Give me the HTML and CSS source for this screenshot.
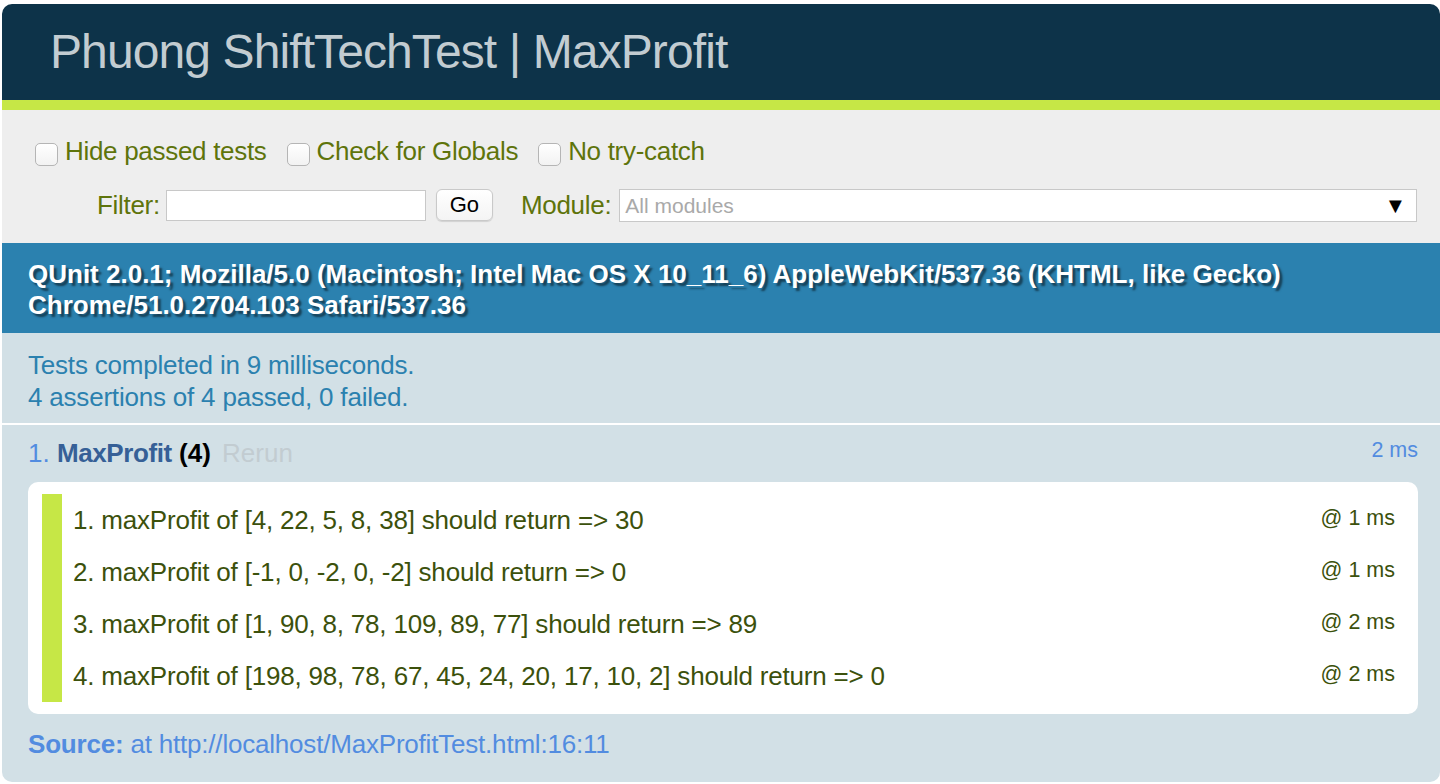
FILE: index.html
```html
<!DOCTYPE html>
<html lang="en">
<head>
<meta charset="utf-8">
<title>Phuong ShiftTechTest | MaxProfit</title>
<link rel="stylesheet" href="styles.css">
</head>
<body>
<div class="qunit">
  <h1 class="header"><a href="#">Phuong ShiftTechTest | MaxProfit</a></h1>
  <div class="banner"></div>
  <div class="toolbar">
    <div class="config-row">
      <label class="cfg"><input type="checkbox" class="cb"><span>Hide passed tests</span></label>
      <label class="cfg"><input type="checkbox" class="cb"><span>Check for Globals</span></label>
      <label class="cfg"><input type="checkbox" class="cb"><span>No try-catch</span></label>
    </div>
    <div class="filter-row">
      <label class="lbl">Filter:</label>
      <input type="text" class="filter-input">
      <button class="go-btn">Go</button>
      <label class="lbl module-lbl">Module:</label>
      <div class="select-wrap">
        <div class="select">All modules</div>
        <span class="arrow">▼</span>
      </div>
    </div>
  </div>
  <h2 class="user-agent">QUnit 2.0.1; Mozilla/5.0 (Macintosh; Intel Mac OS X 10_11_6) AppleWebKit/537.36 (KHTML, like Gecko) Chrome/51.0.2704.103 Safari/537.36</h2>
  <p class="testresult">Tests completed in 9 milliseconds.<br>4 assertions of 4 passed, 0 failed.</p>
  <ol class="tests">
    <li class="test pass">
      <div class="test-head">
        <div><span class="num">1. </span><strong><span class="test-name">MaxProfit</span> <b class="counts">(4)</b></strong> <a class="rerun" href="#">Rerun</a></div>
        <span class="runtime">2 ms</span>
      </div>
      <ol class="assert-list">
        <li class="assert"><span class="msg">1. maxProfit of [4, 22, 5, 8, 38] should return =&gt; 30</span><span class="a-runtime">@ 1 ms</span></li>
        <li class="assert"><span class="msg">2. maxProfit of [-1, 0, -2, 0, -2] should return =&gt; 0</span><span class="a-runtime">@ 1 ms</span></li>
        <li class="assert"><span class="msg">3. maxProfit of [1, 90, 8, 78, 109, 89, 77] should return =&gt; 89</span><span class="a-runtime">@ 2 ms</span></li>
        <li class="assert"><span class="msg">4. maxProfit of [198, 98, 78, 67, 45, 24, 20, 17, 10, 2] should return =&gt; 0</span><span class="a-runtime">@ 2 ms</span></li>
      </ol>
      <p class="source"><strong>Source:</strong> at http://localhost/MaxProfitTest.html:16:11</p>
    </li>
  </ol>
</div>
</body>
</html>
```

FILE: styles.css
```css
* { box-sizing: border-box; }
html, body { height: 100%; }
body {
  margin: 4px 0 0 2px;
  font-family: "Liberation Sans", Arial, sans-serif;
  background: #fff;
  overflow: hidden;
}
.qunit { width: 1438px; }

.header {
  margin: 0;
  padding: 24px 0 24px 48px;
  background: #0D3349;
  border-radius: 10px 10px 0 0;
  font-size: 48px;
  line-height: 48px;
  font-weight: 400;
  letter-spacing: -0.9px;
}
.header a { color: #C2CCD1; text-decoration: none; }

.banner { height: 10px; background: #C6E746; }

.toolbar {
  background: #EEE;
  color: #5E740B;
  font-size: 26px;
  height: 133px;
  padding: 0 0 0 33px;
}
.config-row {
  display: flex;
  align-items: center;
  gap: 20px;
  padding-top: 26px;
  height: 56px;
}
.cfg { display: flex; align-items: center; gap: 7px; letter-spacing: -0.3px; }
.cb {
  appearance: none;
  -webkit-appearance: none;
  margin: 6px 0 0 0;
  width: 23px;
  height: 23px;
  border: 1px solid #b5b5b5;
  border-radius: 5px;
  background: linear-gradient(#fff, #f2f2f2);
}
.filter-row {
  display: flex;
  align-items: center;
  height: 36px;
  margin-top: 21px;
  padding-left: 62px;
}
.lbl { letter-spacing: -0.3px; }
.filter-input {
  margin-left: 6px;
  width: 260px;
  height: 31px;
  border: 1px solid #c8c8c8;
  background: #fff;
}
.go-btn {
  margin-left: 10px;
  width: 57px;
  height: 32px;
  border: 1px solid #c9c9c9;
  border-radius: 6px;
  background: linear-gradient(#fff, #f4f4f4);
  box-shadow: 0 1px 1px rgba(0,0,0,0.12);
  font-family: "Liberation Sans", Arial, sans-serif;
  font-size: 22px;
  color: #000;
  padding: 0;
}
.module-lbl { margin-left: 28px; }
.select-wrap { position: relative; margin-left: 8px; }
.select {
  width: 798px;
  height: 33px;
  border: 1px solid #c8c8c8;
  background: #fff;
  color: #a9a9a9;
  font-size: 21px;
  line-height: 31px;
  padding-left: 5px;
}
.arrow {
  position: absolute;
  right: 11px;
  top: 2px;
  font-size: 22px;
  line-height: 29px;
  color: #000;
}

.user-agent {
  margin: 0;
  padding: 16px 26px 12px;
  background: #2B81AF;
  color: #fff;
  font-size: 26px;
  line-height: 31px;
  font-weight: 700;
  text-shadow: rgba(0,0,0,0.5) 3px 3px 2px;
  letter-spacing: 0;
}

.testresult {
  margin: 0;
  padding: 16px 26px 10px;
  background: #D2E0E6;
  color: #2B81AF;
  font-size: 26px;
  line-height: 32px;
  border-bottom: 2px solid #fff;
  letter-spacing: -0.2px;
}

.tests { list-style: none; margin: 0; padding: 0; }
.test {
  background: #D2E0E6;
  color: #528CE0;
  font-size: 26px;
  padding: 12px 22px 8px 26px;
  border-radius: 0 0 10px 10px;
  height: 357px;
}
.test-head {
  display: flex;
  justify-content: space-between;
  align-items: flex-start;
  line-height: 32px;
}
.test-name { color: #366097; font-weight: 700; letter-spacing: -0.4px; }
.counts { color: #000; font-weight: 700; }
.rerun { color: #C2CCD1; text-decoration: none; margin-left: 4px; }
.runtime { font-size: 21.5px; line-height: 26px; }

.assert-list {
  list-style: none;
  margin: 13px 0 0 0;
  padding: 12px 14px;
  background: #fff;
  border-radius: 10px;
}
.assert {
  display: flex;
  justify-content: space-between;
  align-items: flex-start;
  color: #3C510C;
  border-left: 20px solid #C6E746;
  padding: 10px 9px 10px 11px;
  line-height: 32px;
}
.msg { letter-spacing: -0.2px; }
.a-runtime { font-size: 21.5px; line-height: 28px; }

.source {
  margin: 14px 0 0 0;
  line-height: 32px;
  letter-spacing: -0.2px;
}
.source strong { font-weight: 700; }
```
